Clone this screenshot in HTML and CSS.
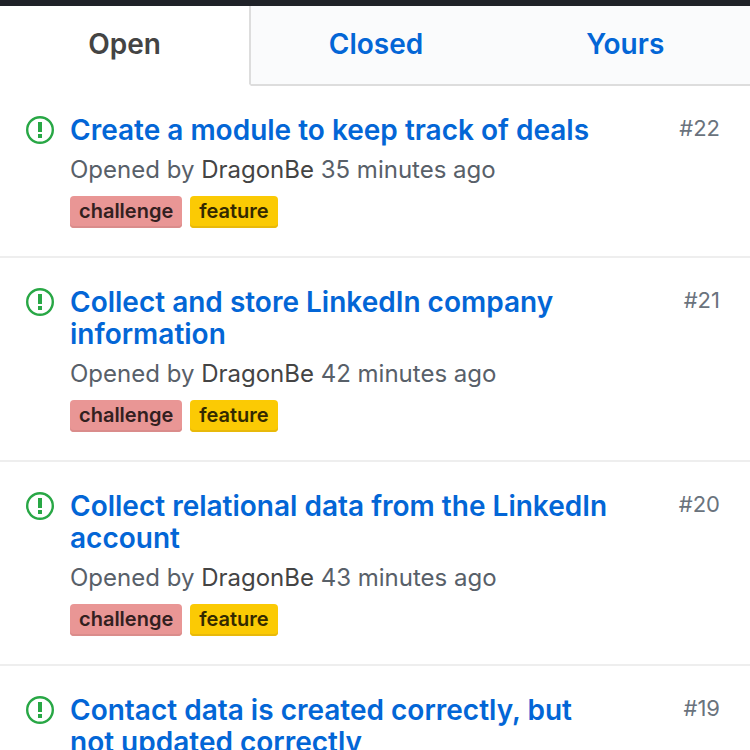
FILE: index.html
```
<!DOCTYPE html>
<html lang="en">
<head>
    <meta charset="UTF-8">
    <meta name="viewport" content="width=device-width, initial-scale=1.0">
    <title>Issues</title>
    <link rel="stylesheet" href="styles.css">
</head>
<body>
    <nav class="tabs">
        <a class="tab selected" href="#open">Open</a>
        <a class="tab" href="#closed">Closed</a>
        <a class="tab" href="#yours">Yours</a>
    </nav>

    <ul class="issues">
        <li class="issue">
            <svg class="icon" viewBox="0 0 28 28" aria-hidden="true">
                <circle cx="14" cy="14" r="12.8"/>
                <path d="M12 6h4v10h-4zM12 18h4v4h-4z"/>
            </svg>
            <div class="content">
                <a class="title" href="#22">Create a module to keep track of deals</a>
                <p class="meta">Opened by <span class="author">DragonBe</span> 35 minutes ago</p>
                <div class="labels">
                    <span class="label challenge">challenge</span>
                    <span class="label feature">feature</span>
                </div>
            </div>
            <span class="number">#22</span>
        </li>
        <li class="issue">
            <svg class="icon" viewBox="0 0 28 28" aria-hidden="true">
                <circle cx="14" cy="14" r="12.8"/>
                <path d="M12 6h4v10h-4zM12 18h4v4h-4z"/>
            </svg>
            <div class="content">
                <a class="title" href="#21">Collect and store LinkedIn company information</a>
                <p class="meta">Opened by <span class="author">DragonBe</span> 42 minutes ago</p>
                <div class="labels">
                    <span class="label challenge">challenge</span>
                    <span class="label feature">feature</span>
                </div>
            </div>
            <span class="number">#21</span>
        </li>
        <li class="issue">
            <svg class="icon" viewBox="0 0 28 28" aria-hidden="true">
                <circle cx="14" cy="14" r="12.8"/>
                <path d="M12 6h4v10h-4zM12 18h4v4h-4z"/>
            </svg>
            <div class="content">
                <a class="title" href="#20">Collect relational data from the LinkedIn account</a>
                <p class="meta">Opened by <span class="author">DragonBe</span> 43 minutes ago</p>
                <div class="labels">
                    <span class="label challenge">challenge</span>
                    <span class="label feature">feature</span>
                </div>
            </div>
            <span class="number">#20</span>
        </li>
        <li class="issue">
            <svg class="icon" viewBox="0 0 28 28" aria-hidden="true">
                <circle cx="14" cy="14" r="12.8"/>
                <path d="M12 6h4v10h-4zM12 18h4v4h-4z"/>
            </svg>
            <div class="content">
                <a class="title" href="#19">Contact data is created correctly, but not updated correctly</a>
            </div>
            <span class="number">#19</span>
        </li>
    </ul>
</body>
</html>
```
FILE: styles.css
```
* {
    box-sizing: border-box;
}

body {
    margin: 0;
    height: 100vh;
    overflow: hidden;
    border-top: 6px solid #1f2228;
    background-color: #fff;
    color: #586069;
    font-family: Inter, "Liberation Sans", sans-serif;
}

a {
    color: #0366d6;
    text-decoration: none;
}

.tabs {
    display: flex;
}

.tab {
    flex: 1;
    height: 80px;
    padding-top: 20px;
    border-bottom: 2px solid #ddd;
    background-color: #fafbfc;
    font-size: 28px;
    font-weight: 600;
    line-height: 36px;
    text-align: center;
}

.tab.selected {
    border-right: 2px solid #ddd;
    border-bottom-color: #fff;
    background-color: #fff;
    color: #444;
}

.issues {
    margin: 0;
    padding: 0;
    list-style: none;
}

.issue {
    display: flex;
    gap: 16px;
    padding: 28px 30px 28px 26px;
    border-bottom: 2px solid #eee;
}

.icon {
    flex: none;
    width: 28px;
    height: 28px;
    margin-top: 2px;
    fill: #28a745;
}

.icon circle {
    fill: none;
    stroke: #28a745;
    stroke-width: 2.4;
}

.content {
    flex: 1;
    padding-right: 48px;
}

.title {
    display: block;
    font-size: 28px;
    font-weight: 600;
    line-height: 32px;
}

.meta {
    margin: 6px 0 8px;
    font-size: 24px;
    line-height: 36px;
}

.author {
    color: #444;
}

.labels {
    display: flex;
    gap: 8px;
}

.label {
    height: 32px;
    padding: 0 9px;
    border-radius: 4px;
    font-size: 20px;
    font-weight: 600;
    line-height: 30px;
}

.challenge {
    background-color: #e99695;
    box-shadow: inset 0 -2px 0 #da8c8b;
    color: #33201f;
}

.feature {
    background-color: #fbca04;
    box-shadow: inset 0 -2px 0 #e8b90a;
    color: #332900;
}

.number {
    color: #6a737d;
    font-size: 22px;
    line-height: 28px;
}
```
